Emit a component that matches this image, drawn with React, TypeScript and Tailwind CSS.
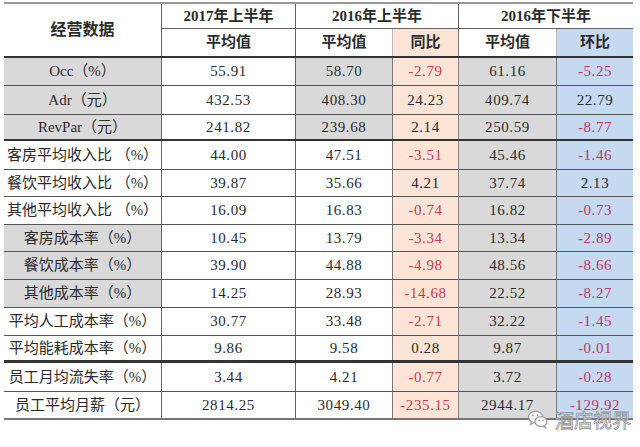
import type { ReactNode } from 'react'

type Row = {
  label: string
  a: string
  b: string
  yoy: string
  c: string
  qoq: string
  grayLabel?: boolean
  grayB?: boolean
  h: number
  line: string
}

const cols = 'grid grid-cols-[158px_134px_97px_66px_98px_76px]'
const font = "font-['Liberation_Serif','Noto_Sans_CJK_SC',serif]"

const rows: Row[] = [
  { label: 'Occ（%）', a: '55.91', b: '58.70', yoy: '-2.79', c: '61.16', qoq: '-5.25', grayLabel: true, grayB: true, h: 28, line: 'border-b border-[#555]' },
  { label: 'Adr（元）', a: '432.53', b: '408.30', yoy: '24.23', c: '409.74', qoq: '22.79', grayLabel: true, grayB: true, h: 29, line: 'border-b border-[#555]' },
  { label: 'RevPar（元）', a: '241.82', b: '239.68', yoy: '2.14', c: '250.59', qoq: '-8.77', grayLabel: true, grayB: true, h: 26, line: 'border-b-2 border-[#333]' },
  { label: '客房平均收入比 （%）', a: '44.00', b: '47.51', yoy: '-3.51', c: '45.46', qoq: '-1.46', h: 29, line: 'border-b border-[#555]' },
  { label: '餐饮平均收入比 （%）', a: '39.87', b: '35.66', yoy: '4.21', c: '37.74', qoq: '2.13', h: 27, line: 'border-b border-[#555]' },
  { label: '其他平均收入比 （%）', a: '16.09', b: '16.83', yoy: '-0.74', c: '16.82', qoq: '-0.73', h: 28, line: 'border-b border-[#555]' },
  { label: '客房成本率（%）', a: '10.45', b: '13.79', yoy: '-3.34', c: '13.34', qoq: '-2.89', grayLabel: true, h: 27, line: 'border-b border-[#555]' },
  { label: '餐饮成本率（%）', a: '39.90', b: '44.88', yoy: '-4.98', c: '48.56', qoq: '-8.66', grayLabel: true, h: 28, line: 'border-b border-[#555]' },
  { label: '其他成本率（%）', a: '14.25', b: '28.93', yoy: '-14.68', c: '22.52', qoq: '-8.27', grayLabel: true, h: 28, line: 'border-b border-[#555]' },
  { label: '平均人工成本率（%）', a: '30.77', b: '33.48', yoy: '-2.71', c: '32.22', qoq: '-1.45', h: 28, line: 'border-b border-[#555]' },
  { label: '平均能耗成本率（%）', a: '9.86', b: '9.58', yoy: '0.28', c: '9.87', qoq: '-0.01', h: 27, line: 'border-b-[3px] border-[#333]' },
  { label: '员工月均流失率（%）', a: '3.44', b: '4.21', yoy: '-0.77', c: '3.72', qoq: '-0.28', h: 29, line: 'border-b border-[#555]' },
  { label: '员工平均月薪（元）', a: '2814.25', b: '3049.40', yoy: '-235.15', c: '2944.17', qoq: '-129.92', h: 28, line: 'border-b-2 border-[#777]' },
]

function Cell({ children, className = '' }: { children?: ReactNode; className?: string }) {
  return <div className={`flex items-center justify-center whitespace-nowrap ${className}`}>{children}</div>
}

function Num({ value, tone }: { value: string; tone?: 'yoy' | 'qoq' }) {
  const negative = value.startsWith('-')
  const color = !negative ? 'text-[#2b2b2b]' : tone === 'qoq' ? 'text-[#c2356a]' : 'text-[#c73c4e]'
  return <span className={`tracking-[0.6px] ${color}`}>{value}</span>
}

export default function App() {
  return (
    <div className={`relative h-[447px] w-[640px] overflow-hidden bg-white pl-[4px] pt-[2px] text-[15px] text-[#2b2b2b] ${font}`}>
      <div className="w-[629px]">
        <div className={`${cols} grid-rows-[25px_27px] border-t-2 border-b-2 border-t-[#999] border-b-[#333]`}>
          <Cell className="row-span-2 border-r border-[#666] text-[16px] font-bold">经营数据</Cell>
          <Cell className="border-b border-r border-[#666] font-bold">2017年上半年</Cell>
          <Cell className="col-span-2 border-b border-r border-[#666] font-bold">2016年上半年</Cell>
          <Cell className="col-span-2 border-b border-[#666] font-bold">2016年下半年</Cell>
          <Cell className="border-r border-[#666] font-bold">平均值</Cell>
          <Cell className="border-r border-[#bbb] font-bold">平均值</Cell>
          <Cell className="border-r border-[#777] bg-[#fce4d6] font-bold">同比</Cell>
          <Cell className="border-r border-[#bbb] font-bold">平均值</Cell>
          <Cell className="bg-[#c5d9f0] font-bold">环比</Cell>
        </div>
        {rows.map((r) => (
          <div key={r.label} className={`${cols} ${r.line}`} style={{ height: r.h }}>
            <Cell className={`border-r border-[#666] ${r.grayLabel ? 'bg-[#d9d9d9]' : ''}`}>{r.label}</Cell>
            <Cell className="border-r border-[#666]">
              <Num value={r.a} />
            </Cell>
            <Cell className={`border-r border-[#777] ${r.grayB ? 'bg-[#d9d9d9]' : ''}`}>
              <Num value={r.b} />
            </Cell>
            <Cell className="border-r border-[#888] bg-[#fce4d6]">
              <Num value={r.yoy} tone="yoy" />
            </Cell>
            <Cell className="border-r border-[#777] bg-[#d9d9d9]">
              <Num value={r.c} />
            </Cell>
            <Cell className="bg-[#c5d9f0]">
              <Num value={r.qoq} tone="qoq" />
            </Cell>
          </div>
        ))}
      </div>

      {/* watermark */}
      <div className="absolute left-[527px] top-[409px] flex items-center gap-[6px] opacity-90">
        <svg width="22" height="20" viewBox="0 0 22 20" fill="none" stroke="#9a9a9a" strokeWidth="1.3">
          <ellipse cx="8.5" cy="8" rx="7" ry="5.8" fill="white" />
          <path d="M4.5 12.5 L3.5 15.5 L7 13.6" fill="white" />
          <ellipse cx="14" cy="12.5" rx="6" ry="4.8" fill="white" />
          <path d="M17.5 16.3 L18.5 18.8 L15.5 17.2" fill="white" />
          <circle cx="6" cy="6.5" r="0.9" fill="#9a9a9a" stroke="none" />
          <circle cx="10.5" cy="6.5" r="0.9" fill="#9a9a9a" stroke="none" />
          <circle cx="12" cy="11.5" r="0.8" fill="#9a9a9a" stroke="none" />
          <circle cx="16" cy="11.5" r="0.8" fill="#9a9a9a" stroke="none" />
        </svg>
        <span className="font-['Noto_Sans_CJK_SC',sans-serif] text-[19px] leading-none text-white [-webkit-text-stroke:0.8px_#8a8a8a]">
          酒店视界
        </span>
      </div>
    </div>
  )
}
